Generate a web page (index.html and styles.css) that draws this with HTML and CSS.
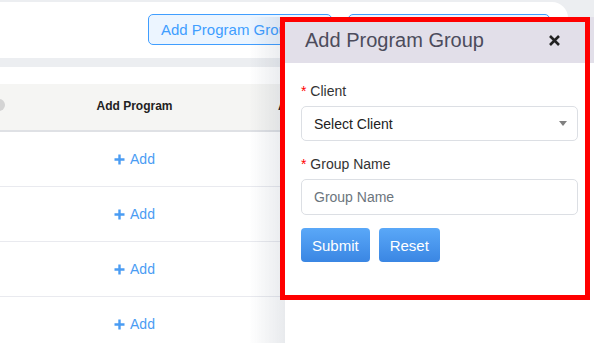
FILE: index.html
```html
<!DOCTYPE html>
<html lang="en">

<head>
  <meta charset="UTF-8">
  <meta name="viewport" content="width=device-width, initial-scale=1.0">
  <title>Program Groups</title>
  <link rel="stylesheet" href="styles.css">
</head>

<body>

  <div class="page">
    <div class="top-card">
      <div class="toolbar">
        <button class="btn-plain">Add Program Group</button>
        <button class="btn-plain wide"></button>
      </div>
    </div>

    <div class="table-card">
      <div class="table">
        <div class="row head">
          <div class="cell">Add Program</div>
          <div class="cell left">Action</div>
        </div>
        <div class="row">
          <div class="cell"><a class="add-link"><svg width="11" height="11" viewBox="0 0 11 11"><path d="M5.5 0.5v10M0.5 5.5h10" /></svg>Add</a></div>
          <div class="cell"></div>
        </div>
        <div class="row">
          <div class="cell"><a class="add-link"><svg width="11" height="11" viewBox="0 0 11 11"><path d="M5.5 0.5v10M0.5 5.5h10" /></svg>Add</a></div>
          <div class="cell"></div>
        </div>
        <div class="row">
          <div class="cell"><a class="add-link"><svg width="11" height="11" viewBox="0 0 11 11"><path d="M5.5 0.5v10M0.5 5.5h10" /></svg>Add</a></div>
          <div class="cell"></div>
        </div>
        <div class="row">
          <div class="cell"><a class="add-link"><svg width="11" height="11" viewBox="0 0 11 11"><path d="M5.5 0.5v10M0.5 5.5h10" /></svg>Add</a></div>
          <div class="cell"></div>
        </div>
      </div>
    </div>
  </div>

  <!-- drawer -->
  <div class="drawer">
    <div class="drawer-header">
      <span class="drawer-title">Add Program Group</span>
      <span class="close"><svg width="11" height="11" viewBox="0 0 11 11"><path d="M1 1l9 9M10 1l-9 9" /></svg></span>
    </div>
    <div class="drawer-body">
      <label class="field-label"><span class="req">*</span> Client</label>
      <div class="select">
        <span>Select Client</span>
        <span class="caret"></span>
      </div>

      <label class="field-label"><span class="req">*</span> Group Name</label>
      <input class="text-input" type="text" placeholder="Group Name">

      <div class="actions">
        <button class="btn-primary">Submit</button>
        <button class="btn-primary">Reset</button>
      </div>
    </div>
  </div>

  <div class="highlight"></div>

</body>

</html>
```

FILE: styles.css
```css
body {
  font-family: "Liberation Sans", Arial, sans-serif;
  background: #eceef1;
  margin: 0;
  padding: 0;
  height: 343px;
  overflow: hidden;
}

.page {
  padding-top: 2px;
}

.top-card {
  width: 568px;
  height: 56px;
  background: #fff;
  border-radius: 0 16px 0 0;
}

.toolbar {
  display: flex;
  gap: 16px;
  padding: 12px 0 0 148px;
}

.btn-plain {
  width: 184px;
  height: 31px;
  padding: 0 0 0 12px;
  text-align: left;
  font-family: inherit;
  font-size: 15px;
  color: #409eff;
  background: #ecf5ff;
  border: 1px solid #409eff;
  border-radius: 5px;
}

.btn-plain.wide {
  width: 202px;
}

.table-card {
  margin-top: 9px;
  background: #fff;
  padding-top: 17px;
  height: 259px;
}

.table {
  width: 568px;
}

.row {
  display: grid;
  grid-template-columns: 269px 1fr;
  height: 55px;
  box-sizing: border-box;
  border-bottom: 1px solid #e9eaef;
}

.row.head {
  position: relative;
  height: 48px;
  padding-bottom: 3px;
  background: #f5f5f3;
  border-bottom: 2px solid #dfe1e5;
  font-size: 12px;
  font-weight: bold;
  color: #222;
}

.row.head::before {
  content: "";
  position: absolute;
  left: -7px;
  top: 15px;
  width: 12px;
  height: 12px;
  border-radius: 50%;
  background: #d4d4d4;
}

.cell {
  display: flex;
  align-items: center;
  justify-content: center;
}

.cell.left {
  justify-content: flex-start;
  padding-left: 9px;
}

.add-link {
  display: flex;
  align-items: center;
  gap: 5px;
  font-size: 14px;
  color: #4a9cf3;
  cursor: pointer;
}

.add-link svg {
  stroke: #4a9cf3;
  stroke-width: 2.4;
}

/* drawer */
.drawer {
  position: fixed;
  top: 17px;
  right: 0;
  bottom: 0;
  width: 309px;
  background: #fff;
}

.drawer::before {
  content: "";
  position: absolute;
  top: 0;
  bottom: 0;
  left: -36px;
  width: 36px;
  background: linear-gradient(to right, rgba(30, 50, 80, 0), rgba(30, 50, 80, 0.1));
}

.drawer-header {
  display: flex;
  align-items: center;
  justify-content: space-between;
  height: 46px;
  padding: 0 34px 0 20px;
  background: #e2dfe9;
}

.drawer-title {
  font-size: 20px;
  color: #4c4c5c;
}

.close svg {
  display: block;
  stroke: #222;
  stroke-width: 2.6;
}

.drawer-body {
  padding: 18px 16px 0 16px;
}

.field-label {
  display: block;
  font-size: 14px;
  line-height: 20px;
  color: #333;
  margin-bottom: 5px;
}

.req {
  color: #f00;
}

.select {
  display: flex;
  align-items: center;
  justify-content: space-between;
  height: 35px;
  padding: 0 10px 0 12px;
  border: 1px solid #dcdfe4;
  border-radius: 5px;
  box-sizing: border-box;
  font-size: 14px;
  color: #222;
  margin-bottom: 13px;
}

.caret {
  width: 0;
  height: 0;
  border-left: 4px solid transparent;
  border-right: 4px solid transparent;
  border-top: 5px solid #808080;
}

.text-input {
  display: block;
  width: 100%;
  height: 36px;
  padding: 0 12px;
  border: 1px solid #dcdfe4;
  border-radius: 5px;
  box-sizing: border-box;
  font-family: inherit;
  font-size: 14px;
  color: #222;
  margin-bottom: 13px;
}

.text-input::placeholder {
  color: #6c757d;
}

.actions {
  display: flex;
  gap: 9px;
}

.btn-primary {
  height: 34px;
  padding: 0 11px;
  font-family: inherit;
  font-size: 15px;
  color: #fff;
  background: linear-gradient(#5aa8f8, #3a86e3);
  border: none;
  border-radius: 4px;
  cursor: pointer;
}

/* annotation box */
.highlight {
  position: fixed;
  left: 280px;
  top: 17px;
  width: 300px;
  height: 273px;
  border: 5px solid #f00;
}
```
